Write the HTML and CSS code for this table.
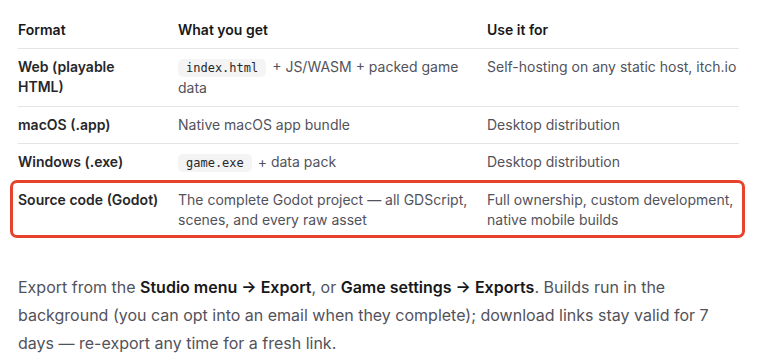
FILE: index.html
```html
<!DOCTYPE html>
<html lang="en">
<head>
<meta charset="utf-8">
<title>Export formats</title>
<link rel="stylesheet" href="styles.css">
</head>
<body>
<main class="doc">
  <table class="formats">
    <colgroup>
      <col class="c1"><col class="c2"><col class="c3">
    </colgroup>
    <thead>
      <tr><th>Format</th><th>What you get</th><th>Use it for</th></tr>
    </thead>
    <tbody>
      <tr>
        <td>Web (playable HTML)</td>
        <td><code>index.html</code> + JS/WASM + packed game data</td>
        <td>Self-hosting on any static host, itch.io</td>
      </tr>
      <tr>
        <td>macOS (.app)</td>
        <td>Native macOS app bundle</td>
        <td>Desktop distribution</td>
      </tr>
      <tr>
        <td>Windows (.exe)</td>
        <td><code>game.exe</code> + data pack</td>
        <td>Desktop distribution</td>
      </tr>
      <tr class="highlight">
        <td><span class="ring"></span>Source code (Godot)</td>
        <td>The complete Godot project — all GDScript, scenes, and every raw asset</td>
        <td>Full ownership, custom development, native mobile builds</td>
      </tr>
    </tbody>
  </table>
  <p class="note">Export from the <strong>Studio menu → Export</strong>, or <strong>Game settings → Exports</strong>. Builds run in the background (you can opt into an email when they complete); download links stay valid for 7 days — re-export any time for a fresh link.</p>
</main>
</body>
</html>
```
FILE: styles.css
```css
html, body {
  margin: 0;
  background: #ffffff;
}
body {
  font-family: Inter, "Noto Sans", sans-serif;
  color: #52525b;
}
.doc {
  width: 721px;
  padding: 12px 0 0 18px;
}
.formats {
  width: 721px;
  border-collapse: collapse;
  table-layout: fixed;
  font-size: 14px;
  line-height: 20px;
}
.c1 { width: 160px; }
.c2 { width: 309px; }
.formats th,
.formats td {
  text-align: left;
  vertical-align: top;
  padding: 8px 16px 8px 0;
  border-bottom: 1px solid #e4e4e7;
}
.formats th:first-child,
.formats td:first-child { padding-right: 18px; }
.formats th:last-child,
.formats td:last-child { padding-right: 0; }
.formats th {
  font-weight: 600;
  color: #18181b;
}
.formats td:first-child {
  font-weight: 600;
  color: #27272a;
}
.formats tbody tr:last-child td { border-bottom: none; }
.formats code {
  font-family: "DejaVu Sans Mono", monospace;
  font-size: 12px;
  color: #27272a;
  background: #f4f4f5;
  border-radius: 5px;
  padding: 2px 8px;
  margin-right: 2px;
}
.highlight { position: relative; }
.ring {
  position: absolute;
  top: -2px;
  bottom: 0;
  left: -8px;
  right: -6px;
  border: 3px solid #e8412c;
  border-radius: 7px;
  pointer-events: none;
}
.note {
  margin: 35px 0 0 0;
  font-size: 16px;
  line-height: 28px;
  color: #52525b;
}
.note strong {
  font-weight: 600;
  color: #18181b;
}
```
